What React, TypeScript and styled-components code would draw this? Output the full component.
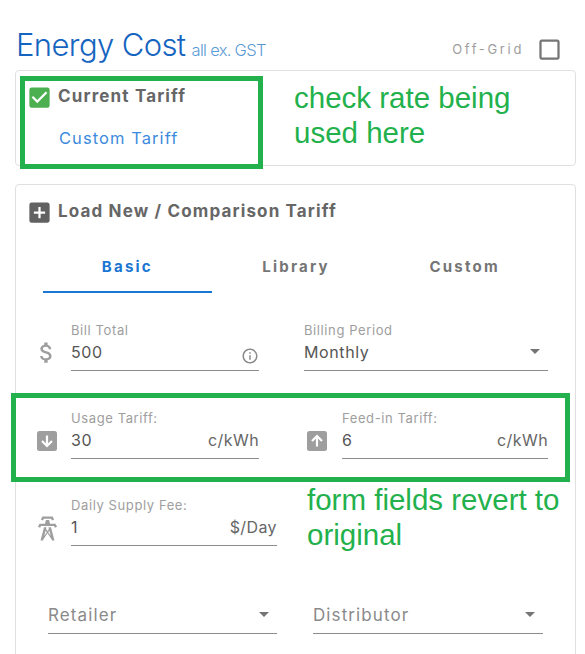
import { ReactNode } from 'react';
import { MdAddBox, MdAttachMoney, MdCheckBox, MdCheckBoxOutlineBlank, MdInfoOutline } from 'react-icons/md';
import styled, { createGlobalStyle } from 'styled-components';

const FONT = `Inter, 'Open Sans', 'Liberation Sans', sans-serif`;

const GlobalStyle = createGlobalStyle`
  html, body {
    margin: 0;
    padding: 0;
    background: #fff;
    font-family: ${FONT};
  }
`;

const StyledPage = styled.div`
  position: relative;
  width: 585px;
  height: 654px;
  overflow: hidden;
  padding: 0 9px 0 15px;
  box-sizing: border-box;
`;

const Header = styled.div`
  display: flex;
  align-items: center;
  height: 70px;
  padding: 18px 0 0 1px;
  box-sizing: border-box;
`;

const Title = styled.h1`
  margin: 0;
  font-size: 31px;
  font-weight: 300;
  color: #1565c0;
  letter-spacing: -0.6px;
`;

const TitleNote = styled.span`
  margin-left: 6px;
  font-size: 16.5px;
  letter-spacing: -0.7px;
  color: #5b9bd5;
`;

const OffGrid = styled.div`
  margin: 10px 13px 0 auto;
  display: flex;
  align-items: center;
  gap: 12px;
  font-size: 13px;
  letter-spacing: 2.65px;
  color: #9e9e9e;
`;

const Card = styled.section`
  border: 1px solid #e0e0e0;
  border-radius: 4px;
  box-sizing: border-box;
`;

const TariffCard = styled(Card)`
  height: 96px;
  padding: 14px 14px;
  margin-bottom: 18px;
`;

const CardHeading = styled.div`
  display: flex;
  align-items: center;
  gap: 7px;
  font-size: 17px;
  font-weight: 700;
  letter-spacing: 1.15px;
  color: #666;
  height: 22px;
`;

const HeadingBox = styled.span`
  display: flex;
  margin: 3px -2px 0 -4px;
`;

const TariffLink = styled.div`
  margin: 21px 0 0 29px;
  font-size: 16.5px;
  letter-spacing: 1.07px;
  color: #3d8bdc;
`;

const ComparisonCard = styled(Card)`
  height: 520px;
  padding-top: 15px;
`;

const ComparisonHeading = styled(CardHeading)`
  padding-left: 14px;
`;

const Tabs = styled.div`
  display: flex;
  margin: 23px 26px 0 27px;
`;

const Tab = styled.div<{ $active?: boolean }>`
  flex: 1;
  height: 48px;
  box-sizing: border-box;
  padding-top: 12px;
  text-align: center;
  font-size: 15px;
  font-weight: 700;
  letter-spacing: 2.2px;
  color: ${({ $active }) => ($active ? '#1976d2' : '#757575')};
  border-bottom: 2px solid ${({ $active }) => ($active ? '#1976d2' : 'transparent')};
`;

const FormRow = styled.div<{ $left: number; $right: number; $top: number }>`
  display: flex;
  justify-content: space-between;
  padding: ${({ $top, $left, $right }) => `${$top}px ${$right}px 0 ${$left}px`};
`;

const FieldGroup = styled.div<{ $width: number }>`
  display: flex;
  align-items: flex-end;
  width: ${({ $width }) => $width}px;
`;

const IconSlot = styled.div<{ $width: number; $lift: number; $nudge?: number }>`
  flex: none;
  display: flex;
  width: ${({ $width }) => $width}px;
  margin-bottom: ${({ $lift }) => $lift}px;
  color: #9e9e9e;

  svg {
    flex: none;
    margin-left: ${({ $nudge }) => $nudge ?? 0}px;
  }
`;

const Field = styled.div`
  flex: 1;
  min-width: 0;
`;

const FieldLabel = styled.div`
  font-size: 13px;
  line-height: 16px;
  letter-spacing: 0.6px;
  color: #9e9e9e;
`;

const FieldControl = styled.div<{ $muted?: boolean }>`
  display: flex;
  align-items: center;
  justify-content: space-between;
  height: 33px;
  padding-bottom: 5px;
  box-sizing: border-box;
  font-size: ${({ $muted }) => ($muted ? 17 : 16)}px;
  letter-spacing: ${({ $muted }) => ($muted ? 1.1 : 0.6)}px;
  color: ${({ $muted }) => ($muted ? '#8a8a8a' : '#555')};
  border-bottom: 1px solid #8c8c8c;
`;

const Unit = styled.span`
  font-size: 16px;
  letter-spacing: 0.4px;
  color: #666;
`;

const Caret = styled.span`
  width: 0;
  height: 0;
  margin-right: 8px;
  border-left: 5px solid transparent;
  border-right: 5px solid transparent;
  border-top: 5px solid #757575;
`;

const InfoIcon = styled(MdInfoOutline)`
  margin-top: 8px;
  color: #8a8a8a;
`;

const Highlight = styled.div`
  position: absolute;
  border: 5px solid #22b14c;
  box-sizing: border-box;
`;

const TariffHighlight = styled(Highlight)`
  left: 20px;
  top: 76px;
  width: 243px;
  height: 93px;
`;

const RatesHighlight = styled(Highlight)`
  left: 11px;
  top: 393px;
  width: 559px;
  height: 89px;
`;

const Annotation = styled.div`
  position: absolute;
  font-family: 'Liberation Sans', Arial, sans-serif;
  font-size: 29.5px;
  line-height: 35px;
  color: #22b14c;
`;

const TariffNote = styled(Annotation)`
  left: 294px;
  top: 80px;
`;

const RatesNote = styled(Annotation)`
  left: 307px;
  top: 482px;
`;

function ArrowBox({ up }: { up?: boolean }) {
  return (
    <svg width='20' height='20' viewBox='0 0 20 20'>
      <rect width='20' height='20' rx='2.5' fill='#9e9e9e' />
      <path
        d={up ? 'M10 15.5V5M5 10l5-5 5 5' : 'M10 4.5V15M5 10l5 5 5-5'}
        fill='none'
        stroke='#fff'
        strokeWidth='2.2'
      />
    </svg>
  );
}

function PylonIcon() {
  return (
    <svg width='29' height='29' viewBox='0 0 24 24' fill='currentColor'>
      <path d='M8.28,5.45L6.5,4.55L7.76,2H16.23L17.5,4.55L15.72,5.45L15,4H9L8.28,5.45M18.62,8H14.09L13.3,5H10.7L9.91,8H5.38L4.1,10.55L5.89,11.44L6.62,10H17.38L18.1,11.44L19.89,10.55L18.62,8M17.77,22H15.7L15.46,21.1L12,15.9L8.53,21.1L8.3,22H6.23L9.12,11H11.19L10.83,12.35L12,14.1L13.16,12.35L12.81,11H14.88L17.77,22M11.4,15L10.5,13.65L9.32,18.13L11.4,15M14.68,18.12L13.5,13.64L12.6,15L14.68,18.12Z' />
    </svg>
  );
}

type InputFieldProps = {
  label?: string;
  value: string;
  muted?: boolean;
  children?: ReactNode;
};

function InputField({ label, value, muted, children }: InputFieldProps) {
  return (
    <Field>
      {label && <FieldLabel>{label}</FieldLabel>}
      <FieldControl $muted={muted}>
        <span>{value}</span>
        {children}
      </FieldControl>
    </Field>
  );
}

function App() {
  return (
    <StyledPage>
      <GlobalStyle />
      <Header>
        <Title>
          Energy Cost<TitleNote>all ex. GST</TitleNote>
        </Title>
        <OffGrid>
          Off-Grid
          <MdCheckBoxOutlineBlank size={27} color='#757575' />
        </OffGrid>
      </Header>

      <TariffCard>
        <CardHeading>
          <HeadingBox>
            <MdCheckBox size={27} color='#4caf50' />
          </HeadingBox>
          Current Tariff
        </CardHeading>
        <TariffLink>Custom Tariff</TariffLink>
      </TariffCard>

      <ComparisonCard>
        <ComparisonHeading>
          <HeadingBox>
            <MdAddBox size={27} color='#616161' />
          </HeadingBox>
          Load New / Comparison Tariff
        </ComparisonHeading>
        <Tabs>
          <Tab $active>Basic</Tab>
          <Tab>Library</Tab>
          <Tab>Custom</Tab>
        </Tabs>

        <FormRow $top={29} $left={21} $right={27}>
          <FieldGroup $width={222}>
            <IconSlot $width={34} $lift={5} $nudge={-4}>
              <MdAttachMoney size={27} />
            </IconSlot>
            <InputField label='Bill Total' value='500'>
              <InfoIcon size={18} />
            </InputField>
          </FieldGroup>
          <FieldGroup $width={244}>
            <InputField label='Billing Period' value='Monthly'>
              <Caret />
            </InputField>
          </FieldGroup>
        </FormRow>

        <FormRow $top={39} $left={21} $right={27}>
          <FieldGroup $width={222}>
            <IconSlot $width={34} $lift={8}>
              <ArrowBox />
            </IconSlot>
            <InputField label='Usage Tariff:' value='30'>
              <Unit>c/kWh</Unit>
            </InputField>
          </FieldGroup>
          <FieldGroup $width={241}>
            <IconSlot $width={35} $lift={8}>
              <ArrowBox up />
            </IconSlot>
            <InputField label='Feed-in Tariff:' value='6'>
              <Unit>c/kWh</Unit>
            </InputField>
          </FieldGroup>
        </FormRow>

        <FormRow $top={38} $left={21} $right={27}>
          <FieldGroup $width={240}>
            <IconSlot $width={34} $lift={3} $nudge={-4}>
              <PylonIcon />
            </IconSlot>
            <InputField label='Daily Supply Fee:' value='1'>
              <Unit>$/Day</Unit>
            </InputField>
          </FieldGroup>
        </FormRow>

        <FormRow $top={55} $left={32} $right={32}>
          <FieldGroup $width={229}>
            <InputField value='Retailer' muted>
              <Caret />
            </InputField>
          </FieldGroup>
          <FieldGroup $width={230}>
            <InputField value='Distributor' muted>
              <Caret />
            </InputField>
          </FieldGroup>
        </FormRow>
      </ComparisonCard>

      <TariffHighlight />
      <TariffNote>
        check rate being
        <br />
        used here
      </TariffNote>
      <RatesHighlight />
      <RatesNote>
        form fields revert to
        <br />
        original
      </RatesNote>
    </StyledPage>
  );
}

export default App;
